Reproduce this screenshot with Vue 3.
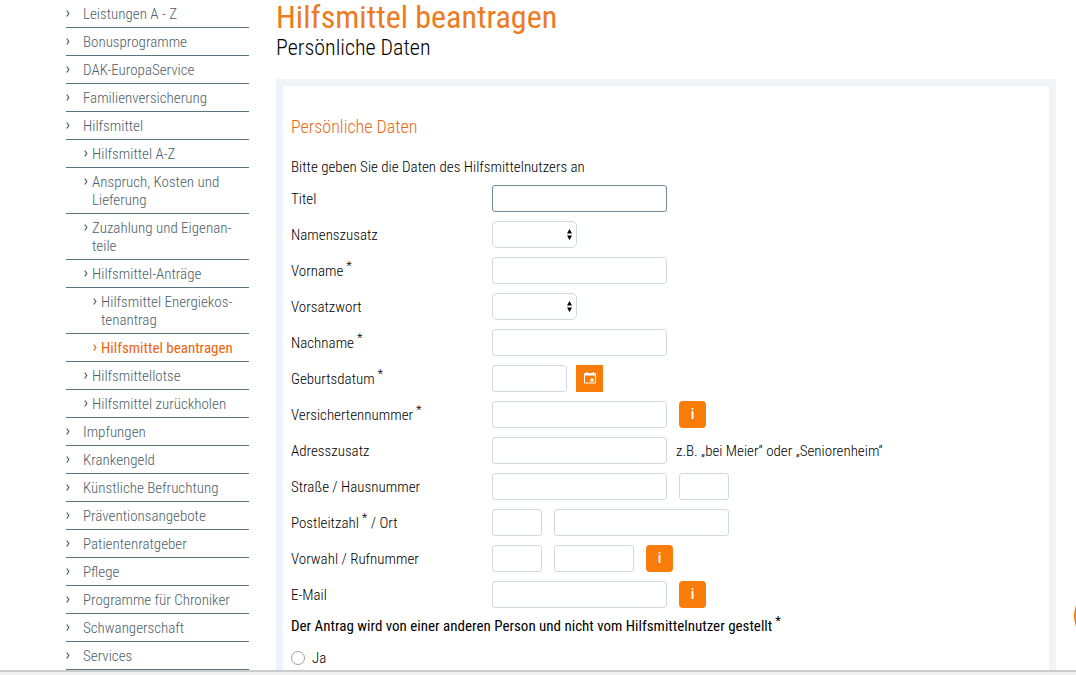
<script setup>
const nav = [
  { text: 'Leistungen A - Z', level: 1 },
  { text: 'Bonusprogramme', level: 1 },
  { text: 'DAK-EuropaService', level: 1 },
  { text: 'Familienversicherung', level: 1 },
  { text: 'Hilfsmittel', level: 1 },
  { text: 'Hilfsmittel A-Z', level: 2 },
  { text: 'Anspruch, Kosten und Lieferung', level: 2 },
  { text: 'Zuzahlung und Eigenan\u00adteile', level: 2 },
  { text: 'Hilfsmittel-Anträge', level: 2 },
  { text: 'Hilfsmittel Energiekos\u00adtenantrag', level: 3 },
  { text: 'Hilfsmittel beantragen', level: 3, active: true },
  { text: 'Hilfsmittellotse', level: 2 },
  { text: 'Hilfsmittel zurückholen', level: 2 },
  { text: 'Impfungen', level: 1 },
  { text: 'Krankengeld', level: 1 },
  { text: 'Künstliche Befruchtung', level: 1 },
  { text: 'Präventionsangebote', level: 1 },
  { text: 'Patientenratgeber', level: 1 },
  { text: 'Pflege', level: 1 },
  { text: 'Programme für Chroniker', level: 1 },
  { text: 'Schwangerschaft', level: 1 },
  { text: 'Services', level: 1 },
]

const rows = [
  { id: 'titel', label: 'Titel', fields: [{ size: 'l', strong: true }] },
  { id: 'zusatz', label: 'Namenszusatz', fields: [{ select: true }] },
  { id: 'vorname', label: 'Vorname', required: true, fields: [{ size: 'l' }] },
  { id: 'vorsatz', label: 'Vorsatzwort', fields: [{ select: true }] },
  { id: 'nachname', label: 'Nachname', required: true, fields: [{ size: 'l' }] },
  { id: 'geburt', label: 'Geburtsdatum', required: true, fields: [{ size: 'm' }], calendar: true },
  { id: 'nummer', label: 'Versichertennummer', required: true, fields: [{ size: 'l' }], info: true },
  { id: 'adresse', label: 'Adresszusatz', fields: [{ size: 'l' }], hint: 'z.B. „bei Meier“ oder „Seniorenheim“' },
  { id: 'strasse', label: 'Straße / Hausnummer', fields: [{ size: 'l' }, { size: 's', name: 'Hausnummer' }] },
  { id: 'plz', label: 'Postleitzahl', required: true, after: ' / Ort', fields: [{ size: 's' }, { size: 'l', name: 'Ort' }] },
  { id: 'vorwahl', label: 'Vorwahl / Rufnummer', fields: [{ size: 's' }, { size: 'n', name: 'Rufnummer' }], info: true },
  { id: 'email', label: 'E-Mail', fields: [{ size: 'l' }], info: true },
]
</script>

<template>
  <div class="page">
    <div class="view">
      <nav class="side">
        <ul>
          <li v-for="n in nav" :key="n.text">
            <a href="#" :class="['level' + n.level, { active: n.active }]">
              <svg class="chevron" viewBox="0 0 4 7" aria-hidden="true"><path d="M.7.5 2.8 3.5.7 6.5" /></svg>
              <span>{{ n.text }}</span>
            </a>
          </li>
        </ul>
      </nav>

      <main>
        <h1>Hilfsmittel beantragen</h1>
        <p class="sub">Persönliche Daten</p>
        <form class="panel" @submit.prevent>
          <h2>Persönliche Daten</h2>
          <p class="intro">Bitte geben Sie die Daten des Hilfsmittelnutzers an</p>
          <div v-for="r in rows" :key="r.id" class="row">
            <label :for="r.id + 0">{{ r.label }}<sup v-if="r.required"> *</sup>{{ r.after }}</label>
            <div class="fields" :class="{ tight: r.calendar || r.hint }">
              <template v-for="(f, i) in r.fields" :key="i">
                <span v-if="f.select" class="pick">
                  <select :id="r.id + i"><option></option></select>
                  <svg viewBox="0 0 5 11" aria-hidden="true"><path d="M2.5 0 5 4.5H0zM0 6.5h5L2.5 11z" /></svg>
                </span>
                <input v-else :id="r.id + i" type="text" :aria-label="f.name" :class="['w-' + f.size, { strong: f.strong }]">
              </template>
              <button v-if="r.calendar" type="button" class="calendar" aria-label="Kalender">
                <svg viewBox="0 0 12 12" aria-hidden="true">
                  <path fill-rule="evenodd" d="M2 0h1.300v1h5.400V0H10v1h.700C11.400 1 12 1.500 12 2.200v8c0 .700-.600 1.300-1.300 1.300H1.300C.600 11.500 0 10.900 0 10.200v-8C0 1.500.600 1 1.300 1H2zM1 3.600v6.900h10V3.600zM6.500 6.500h3v3h-3z" />
                </svg>
              </button>
              <button v-if="r.info" type="button" class="info" :aria-label="'Information: ' + r.label">i</button>
              <span v-if="r.hint" class="hint">{{ r.hint }}</span>
            </div>
          </div>
          <fieldset>
            <legend>Der Antrag wird von einer anderen Person und nicht vom Hilfsmittelnutzer gestellt<sup> *</sup></legend>
            <label class="radio"><input type="radio" name="vertreter"><span>Ja</span></label>
          </fieldset>
        </form>
      </main>
      <button class="bubble" type="button" aria-label="Kontakt"></button>
    </div>
    <div class="edge"></div>
  </div>
</template>

<style>
body {
  margin: 0;
  background: #fff;
}
</style>

<style scoped>
* {
  box-sizing: border-box;
}
.page {
  display: flex;
  flex-direction: column;
  height: 100vh;
  font: 300 15px/18px "Roboto Condensed", "Liberation Sans Narrow", Roboto, sans-serif;
  color: #000;
}
.view {
  position: relative;
  flex: 1;
  min-height: 0;
  display: flex;
  gap: 27px;
  padding: 0 20px 0 66px;
  overflow: hidden;
}
.edge {
  flex: none;
  height: 5px;
  background: #f0f0f0;
  border-top: 2px solid #ccc;
}
.side {
  flex: 0 0 183px;
}
ul {
  list-style: none;
  margin: 0;
  padding: 0;
}
.side a {
  display: flex;
  padding: 5px 0 4px;
  border-bottom: 1px solid #5a7482;
  color: #4c6069;
  text-decoration: none;
}
.chevron {
  flex: none;
  width: 4px;
  height: 7px;
  margin: 5px 13px 0 0;
  fill: none;
  stroke: currentColor;
  stroke-width: 1.2;
}
.side .level2 {
  padding-left: 18px;
}
.side .level3 {
  padding-left: 27px;
}
.level2 .chevron,
.level3 .chevron {
  margin-right: 4px;
}
.side .active span {
  font-weight: 400;
}
.side .active {
  color: #f0640f;
  border-color: #5a7482;
}
main {
  flex: 1;
  min-width: 0;
}
h1 {
  margin: 0;
  font-size: 32px;
  line-height: 34px;
  font-weight: 400;
  color: #ec7c22;
}
.sub {
  margin: 0 0 18px;
  font-size: 22px;
  line-height: 27px;
}
.panel {
  border: 7px solid #f1f4f6;
  padding: 30px 8px;
}
h2 {
  margin: 0 0 20px;
  font-size: 18px;
  line-height: 22px;
  font-weight: 300;
  color: #e56a18;
}
.intro {
  margin: 0 0 4px;
}
.row {
  display: flex;
  align-items: center;
  height: 36px;
}
.row > label {
  flex: 0 0 201px;
  padding-top: 2px;
}
.hint {
  padding-top: 2px;
}
sup {
  font-size: 13px;
  line-height: 0;
  white-space: pre;
}
.fields {
  display: flex;
  align-items: center;
  gap: 12px;
}
.fields.tight {
  gap: 9px;
}
input[type="text"],
select {
  height: 27px;
  margin: 0;
  padding: 0 6px;
  border: 1px solid #d0dbe0;
  border-radius: 3px;
  background: #fff;
  font: inherit;
  outline-color: #5f7885;
}
input[type="text"].strong {
  border-color: #71899a;
}
.w-l {
  width: 175px;
}
.w-m {
  width: 75px;
}
.w-n {
  width: 80px;
}
.w-s {
  width: 50px;
}
.pick {
  position: relative;
  display: flex;
}
select {
  width: 85px;
  appearance: none;
  border-radius: 5px;
}
.pick svg {
  position: absolute;
  right: 5px;
  top: 8px;
  width: 5px;
  height: 11px;
  pointer-events: none;
}
button {
  display: flex;
  align-items: center;
  justify-content: center;
  padding: 0;
  border: 0;
  background: #f97b08;
  color: #fff;
}
.calendar,
.info {
  width: 27px;
  height: 27px;
}
.calendar svg {
  width: 12px;
  height: 12px;
  fill: #fff;
}
.info {
  border-radius: 4px;
  font: 500 15px/18px "Roboto Condensed", Roboto, sans-serif;
}
fieldset {
  margin: 5px 0 0;
  padding: 0;
  border: 0;
}
legend {
  padding: 0;
  font-weight: 400;
}
.radio {
  display: flex;
  align-items: center;
  gap: 7px;
  margin-top: 14px;
}
.radio input {
  appearance: none;
  width: 14px;
  height: 14px;
  margin: 0;
  border: 1px solid #a0a0a0;
  border-radius: 50%;
  background: #fff;
}
.bubble {
  position: absolute;
  right: -58px;
  top: 586px;
  width: 60px;
  height: 60px;
  border-radius: 50%;
}
</style>
